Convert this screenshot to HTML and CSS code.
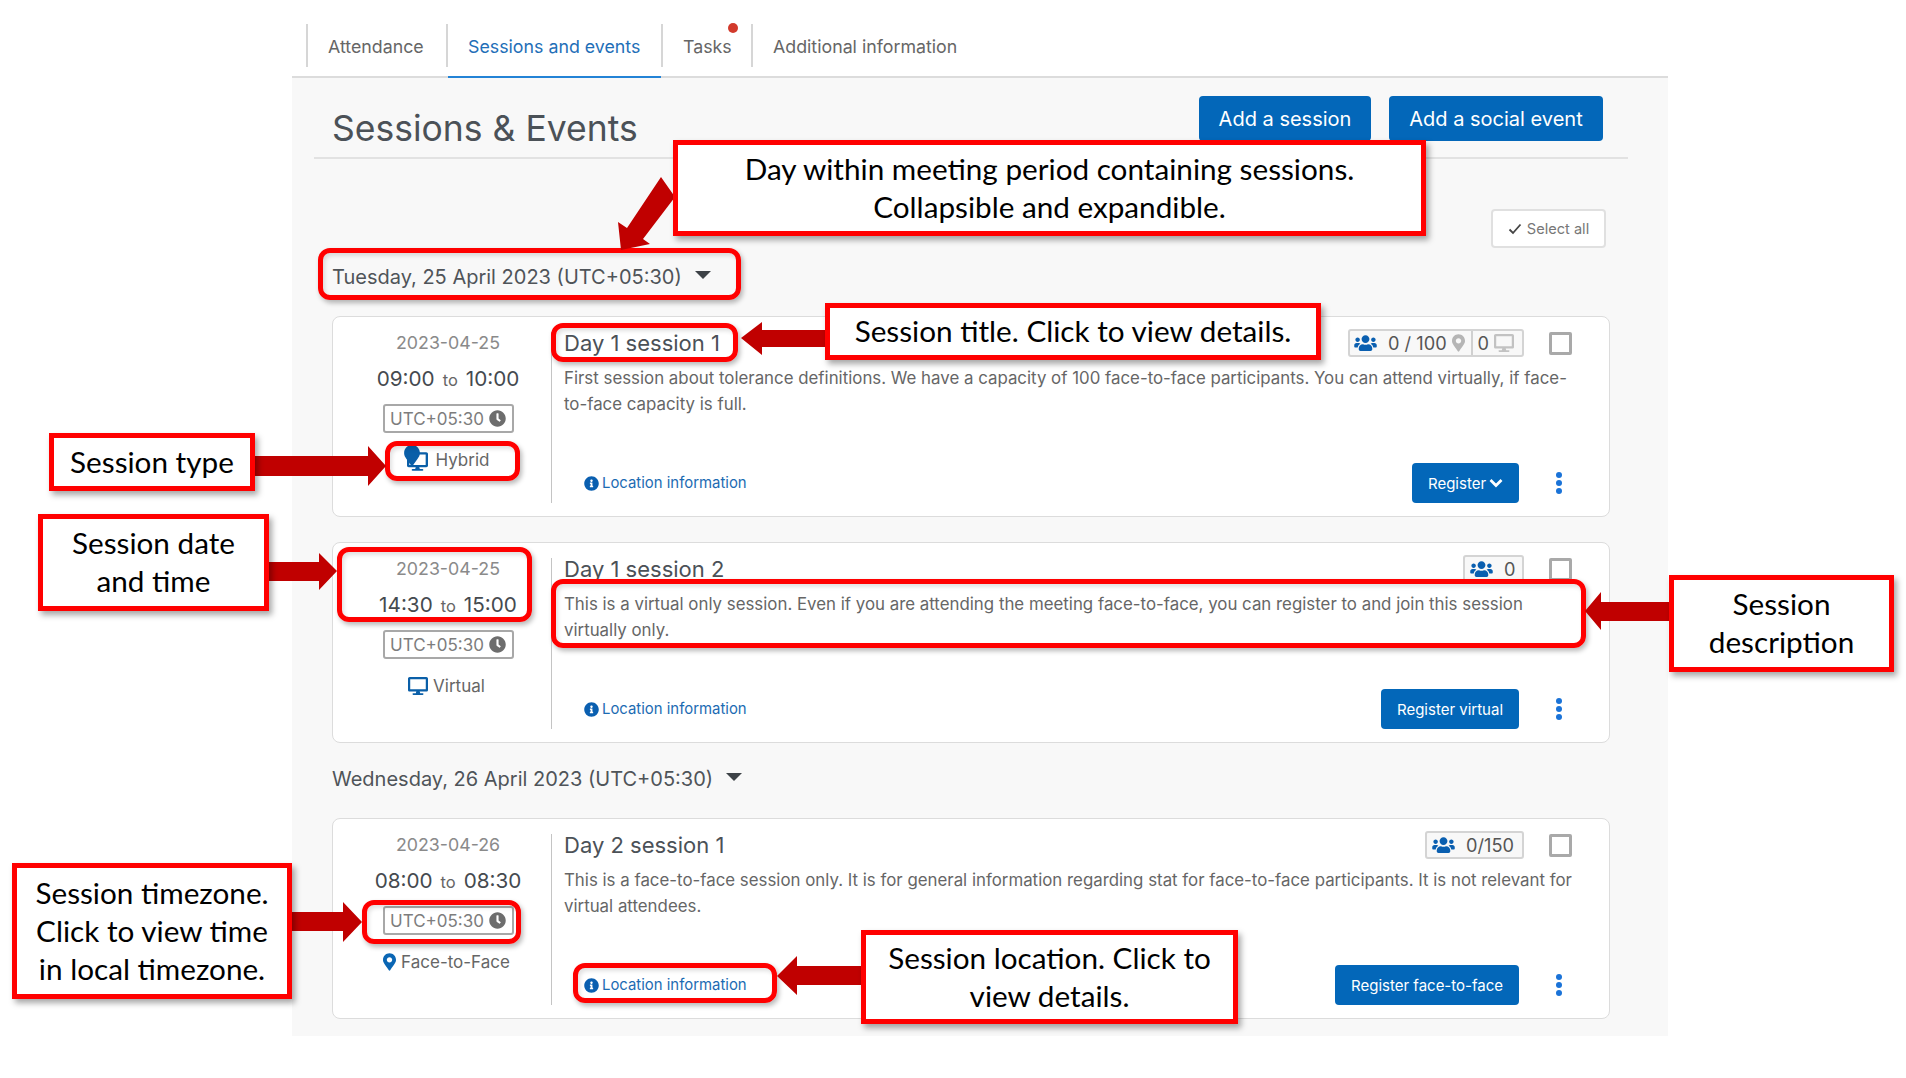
FILE: index.html
```html
<!DOCTYPE html>
<html lang="en">
<head>
<meta charset="utf-8">
<title>Sessions &amp; Events</title>
<link rel="stylesheet" href="styles.css">
</head>
<body>
<svg class="defs" width="0" height="0" aria-hidden="true">
  <symbol id="i-users" viewBox="0 0 640 512"><path d="M96 224c35.300 0 64-28.700 64-64s-28.700-64-64-64-64 28.700-64 64 28.700 64 64 64zm448 0c35.300 0 64-28.700 64-64s-28.700-64-64-64-64 28.700-64 64 28.700 64 64 64zm32 32h-64c-17.600 0-33.500 7.100-45.100 18.600 40.300 22.100 68.900 62 75.100 109.400h66c17.700 0 32-14.300 32-32v-32c0-35.300-28.700-64-64-64zm-256 0c61.900 0 112-50.100 112-112S381.900 32 320 32 208 82.100 208 144s50.100 112 112 112zm76.800 32h-8.300c-20.800 10-43.900 16-68.500 16s-47.600-6-68.500-16h-8.300C179.600 288 128 339.600 128 403.200V432c0 26.500 21.500 48 48 48h288c26.500 0 48-21.500 48-48v-28.800c0-63.600-51.600-115.200-115.200-115.200zm-223.700-13.400C161.500 263.100 145.600 256 128 256H64c-35.300 0-64 28.700-64 64v32c0 17.700 14.300 32 32 32h65.900c6.300-47.400 34.900-87.300 75.200-109.400z"/></symbol>
  <symbol id="i-clock" viewBox="0 0 512 512"><path d="M256,8C119,8,8,119,8,256S119,504,256,504,504,393,504,256,393,8,256,8Zm92.490,313h0l-20,25a16,16,0,0,1-22.490,2.500h0l-67-49.720a40,40,0,0,1-15-31.230V112a16,16,0,0,1,16-16h32a16,16,0,0,1,16,16V256l58,42.500A16,16,0,0,1,348.490,321Z"/></symbol>
  <symbol id="i-info" viewBox="0 0 512 512"><path d="M256 8C119.043 8 8 119.083 8 256c0 136.997 111.043 248 248 248s248-111.003 248-248C504 119.083 392.957 8 256 8zm0 110c23.196 0 42 18.804 42 42s-18.804 42-42 42-42-18.804-42-42 18.804-42 42-42zm56 254c0 6.627-5.373 12-12 12h-88c-6.627 0-12-5.373-12-12v-24c0-6.627 5.373-12 12-12h12v-64h-12c-6.627 0-12-5.373-12-12v-24c0-6.627 5.373-12 12-12h64c6.627 0 12 5.373 12 12v100h12c6.627 0 12 5.373 12 12v24z"/></symbol>
  <symbol id="i-marker" viewBox="0 0 384 512"><path d="M172.268 501.670C26.970 291.031 0 269.413 0 192 0 85.961 85.961 0 192 0s192 85.961 192 192c0 77.413-26.970 99.031-172.268 309.670-9.535 13.774-29.930 13.773-39.464 0zM192 272c44.183 0 80-35.817 80-80s-35.817-80-80-80-80 35.817-80 80 35.817 80 80 80z"/></symbol>
  <symbol id="i-marker-solid" viewBox="0 0 384 512"><path d="M172.268 501.670C26.970 291.031 0 269.413 0 192 0 85.961 85.961 0 192 0s192 85.961 192 192c0 77.413-26.970 99.031-172.268 309.670-9.535 13.774-29.930 13.773-39.464 0z"/></symbol>
  <symbol id="i-desktop" viewBox="0 0 576 512"><path d="M528 0H48C21.500 0 0 21.500 0 48v320c0 26.500 21.500 48 48 48h192l-16 48h-72c-13.300 0-24 10.700-24 24s10.700 24 24 24h272c13.300 0 24-10.700 24-24s-10.700-24-24-24h-72l-16-48h192c26.500 0 48-21.500 48-48V48c0-26.500-21.500-48-48-48zm-16 352H64V64h448v288z"/></symbol>
</svg>

<main class="panel">
  <nav class="tabs">
    <a class="tab tab-attendance">Attendance</a>
    <a class="tab tab-sessions tab-active">Sessions and events</a>
    <a class="tab tab-tasks">Tasks<span class="dot"></span></a>
    <a class="tab tab-additional">Additional information</a>
  </nav>

  <header class="head">
    <h1 class="title">Sessions &amp; Events</h1>
    <div class="head-actions">
      <button class="btn btn-lg btn-session">Add a session</button>
      <button class="btn btn-lg btn-social">Add a social event</button>
    </div>
  </header>

  <div class="toolbar">
    <button class="select-all"><svg class="check" viewBox="0 0 14 12"><path d="M1.500 6.500 5 10l7.500-8.500"/></svg>Select all</button>
  </div>

  <section class="sessions">
    <h2 class="day day-first">Tuesday, 25 April 2023 (UTC+05:30)<span class="caret"></span></h2>

    <article class="card">
      <div class="when">
        <div class="date">2023-04-25</div>
        <div class="time">09:00<small>to</small>10:00</div>
        <div class="tz">UTC+05:30<svg class="i-clock"><use href="#i-clock"/></svg></div>
        <div class="type"><span class="hybrid"><svg class="hy-desk"><use href="#i-desktop"/></svg><svg class="hy-pin"><use href="#i-marker-solid"/></svg></span>Hybrid</div>
      </div>
      <div class="body">
        <div class="top">
          <h3 class="name">Day 1 session 1</h3>
          <div class="badge badge-hy">
            <svg class="i-users"><use href="#i-users"/></svg><span class="cnt">0 / 100</span><svg class="i-pin-g"><use href="#i-marker"/></svg><span class="cnt cnt-v">0</span><svg class="i-desk-g"><use href="#i-desktop"/></svg>
          </div>
          <span class="cb"></span>
        </div>
        <p class="desc">First session about tolerance definitions. We have a capacity of 100 face-to-face participants. You can attend virtually, if face-to-face capacity is full.</p>
        <div class="foot">
          <a class="loc"><svg class="i-info"><use href="#i-info"/></svg>Location information</a>
          <button class="btn btn-sm btn-reg">Register<svg class="chev" viewBox="0 0 14 10"><path d="M1.500 2l5.500 5.500L12.500 2"/></svg></button>
          <span class="kebab"><i></i><i></i><i></i></span>
        </div>
      </div>
    </article>

    <article class="card card-next">
      <div class="when">
        <div class="date">2023-04-25</div>
        <div class="time">14:30<small>to</small>15:00</div>
        <div class="tz">UTC+05:30<svg class="i-clock"><use href="#i-clock"/></svg></div>
        <div class="type"><svg class="i-desk"><use href="#i-desktop"/></svg>Virtual</div>
      </div>
      <div class="body">
        <div class="top">
          <h3 class="name">Day 1 session 2</h3>
          <div class="badge badge-one">
            <svg class="i-users"><use href="#i-users"/></svg><span class="cnt">0</span>
          </div>
          <span class="cb"></span>
        </div>
        <p class="desc">This is a virtual only session. Even if you are attending the meeting face-to-face, you can register to and join this session virtually only.</p>
        <div class="foot">
          <a class="loc"><svg class="i-info"><use href="#i-info"/></svg>Location information</a>
          <button class="btn btn-sm btn-virtual">Register virtual</button>
          <span class="kebab"><i></i><i></i><i></i></span>
        </div>
      </div>
    </article>

    <h2 class="day day-second">Wednesday, 26 April 2023 (UTC+05:30)<span class="caret"></span></h2>

    <article class="card">
      <div class="when">
        <div class="date">2023-04-26</div>
        <div class="time">08:00<small>to</small>08:30</div>
        <div class="tz">UTC+05:30<svg class="i-clock"><use href="#i-clock"/></svg></div>
        <div class="type"><svg class="i-pin"><use href="#i-marker"/></svg>Face-to-Face</div>
      </div>
      <div class="body">
        <div class="top">
          <h3 class="name">Day 2 session 1</h3>
          <div class="badge badge-f2f">
            <svg class="i-users"><use href="#i-users"/></svg><span class="cnt">0/150</span>
          </div>
          <span class="cb"></span>
        </div>
        <p class="desc">This is a face-to-face session only. It is for general information regarding stat for face-to-face participants. It is not relevant for virtual attendees.</p>
        <div class="foot">
          <a class="loc"><svg class="i-info"><use href="#i-info"/></svg>Location information</a>
          <button class="btn btn-sm btn-f2f">Register face-to-face</button>
          <span class="kebab"><i></i><i></i><i></i></span>
        </div>
      </div>
    </article>
  </section>
</main>

<div class="notes">
  <div class="hl hl-day"></div>
  <div class="hl hl-title"></div>
  <div class="hl hl-type"></div>
  <div class="hl hl-when"></div>
  <div class="hl hl-desc"></div>
  <div class="hl hl-tz"></div>
  <div class="hl hl-loc"></div>

  <svg class="arrows" viewBox="0 0 1906 1078">
    <polygon points="661,177 675,197 643,239 650,244 621,250 618,222 627,228"/>
    <polygon points="825,330 762,330 762,322 741,338 762,355 762,347 825,347"/>
    <polygon points="255,456 368,456 368,446 386,466 368,486 368,476 255,476"/>
    <polygon points="269,562 319,562 319,553 337,571 319,590 319,581 269,581"/>
    <polygon points="1669,602 1601,602 1601,592 1585,611 1601,630 1601,621 1669,621"/>
    <polygon points="292,912 343,912 343,902 362,922 343,942 343,931 292,931"/>
    <polygon points="861,966 797,966 797,956 777,976 797,995 797,985 861,985"/>
  </svg>

  <div class="note note-day">Day within meeting period containing sessions.<br>Collapsible and expandible.</div>
  <div class="note note-title">Session title. Click to view details.</div>
  <div class="note note-type">Session type</div>
  <div class="note note-when">Session date<br>and time</div>
  <div class="note note-desc">Session<br>description</div>
  <div class="note note-tz">Session timezone.<br>Click to view time<br>in local timezone.</div>
  <div class="note note-loc">Session location. Click to<br>view details.</div>
</div>
</body>
</html>
```

FILE: styles.css
```css
* { box-sizing: border-box; }

html, body {
  margin: 0;
  background: #fff;
}

body {
  position: relative;
  width: 1906px;
  height: 1078px;
  overflow: hidden;
  font-family: Inter, "Liberation Sans", sans-serif;
  color: #555;
}

.defs { position: absolute; }

svg { display: block; fill: currentColor; flex: none; }

/* ---------- page ---------- */
.panel {
  margin-left: 292px;
  width: 1376px;
  height: 1036px;
  background: #f8f8f8;
}

.tabs {
  display: flex;
  height: 78px;
  padding: 24px 0 0 14px;
  background: #fff;
  border-bottom: 2px solid #dcdcdc;
}

.tab {
  position: relative;
  height: 43px;
  border-left: 2px solid #d6d6d6;
  padding: 0 0 0 20px;
  font-size: 17.800px;
  line-height: 45px;
  color: #666;
}

.tab-attendance { width: 140px; }
.tab-sessions { width: 215px; }
.tab-tasks { width: 90px; }
.tab-additional { width: 300px; }

.tab-active { color: #1f6fb8; }

.tab-active::after {
  content: "";
  position: absolute;
  left: 0;
  right: 0;
  bottom: -11px;
  height: 2px;
  background: #2383d6;
}

.dot {
  position: absolute;
  left: 65px;
  top: -1px;
  width: 10px;
  height: 10px;
  border-radius: 50%;
  background: #d23a2c;
}

.head {
  display: flex;
  justify-content: space-between;
  align-items: flex-start;
  height: 81px;
  margin: 0 40px 0 22px;
  padding: 18px 25px 0 18px;
  border-bottom: 2px solid #e2e2e2;
}

.title {
  margin: 11px 0 0;
  font-size: 35.500px;
  line-height: 44px;
  font-weight: 400;
  color: #4b5157;
}

.head-actions {
  display: flex;
  gap: 18px;
}

.btn {
  display: flex;
  align-items: center;
  justify-content: center;
  border: 0;
  border-radius: 4px;
  background: #0367b9;
  color: #fff;
  font-family: inherit;
}

.btn-lg { height: 45px; font-size: 20px; }
.btn-session { width: 172px; }
.btn-social { width: 214px; }

.toolbar {
  display: flex;
  justify-content: flex-end;
  margin-top: 50px;
  padding-right: 62px;
}

.select-all {
  display: flex;
  align-items: center;
  justify-content: center;
  gap: 5px;
  width: 115px;
  height: 39px;
  border: 2px solid #e0e0e0;
  border-radius: 4px;
  background: #fff;
  font-family: inherit;
  font-size: 14.600px;
  color: #777;
}

.check {
  width: 14px;
  height: 12px;
  fill: none;
  stroke: #444;
  stroke-width: 1.800;
}

.sessions { padding: 0 58px 0 40px; }

.day {
  display: flex;
  align-items: center;
  margin: 0;
  height: 26px;
  font-size: 20px;
  font-weight: 400;
  color: #4f5459;
}

.day-first { margin-top: 16px; margin-bottom: 26px; }
.day-second { margin-top: 23px; margin-bottom: 26px; }

.caret {
  width: 0;
  height: 0;
  margin: -4px 0 0 13px;
  border-left: 8px solid transparent;
  border-right: 8px solid transparent;
  border-top: 8px solid #3d4247;
}

.card {
  display: grid;
  grid-template-columns: 219px 1fr;
  height: 201px;
  padding: 15px 0 13px;
  background: #fff;
  border: 1.500px solid #dcdcdc;
  border-radius: 8px;
}

.card-next { margin-top: 25px; }

.when {
  display: flex;
  flex-direction: column;
  align-items: center;
  padding-left: 12px;
  border-right: 1.500px solid #c4c4c4;
}

.date {
  height: 22px;
  line-height: 22px;
  font-size: 17.800px;
  color: #8a8a8a;
}

.time {
  height: 24px;
  margin-top: 13px;
  line-height: 24px;
  font-size: 20.700px;
  color: #454a4f;
}

.time small {
  margin: 0 8px;
  font-size: 16.500px;
  color: #666;
}

.tz {
  display: flex;
  align-items: center;
  justify-content: center;
  gap: 5px;
  width: 131px;
  height: 29px;
  margin-top: 13px;
  border: 2px solid #a8a8a8;
  border-radius: 3px;
  font-size: 17px;
  color: #7d7d7d;
}

.i-clock { width: 17px; height: 17px; color: #6d6d6d; }

.type {
  display: flex;
  align-items: center;
  justify-content: center;
  gap: 5px;
  height: 24px;
  margin: 15px 3px 0 0;
  font-size: 17px;
  color: #666;
}

.hybrid {
  position: relative;
  width: 24px;
  height: 24px;
  margin-right: 3px;
  color: #0a5fa8;
}

.hy-desk { position: absolute; left: 3px; top: 4px; width: 21px; height: 19px; }
.hy-pin { position: absolute; left: 0; top: -3px; width: 16px; height: 21px; }

.i-desk { width: 20px; height: 18px; color: #0a5fa8; }
.i-pin { width: 13px; height: 18px; color: #0a66b4; }

.body {
  display: flex;
  flex-direction: column;
  min-width: 0;
  padding: 0 37px 0 12px;
}

.top {
  display: flex;
  align-items: center;
  height: 22px;
}

.name {
  flex: 1;
  margin: 0;
  font-size: 22px;
  font-weight: 400;
  color: #4b5157;
}

.badge {
  display: flex;
  align-items: center;
  height: 28px;
  border: 2px solid #d4d4d4;
  border-radius: 3px;
  background: #f8f8f8;
  font-size: 18.200px;
  color: #555;
}

.badge-hy { width: 176px; padding-left: 4px; }
.badge-one { width: 61px; padding-left: 5px; }
.badge-f2f { width: 99px; padding-left: 5px; }

.i-users { width: 23px; height: 18px; color: #0a5fb0; }

.cnt { margin-left: 11px; }

.i-pin-g { width: 13px; height: 18px; margin-left: 5px; color: #b5b5b5; }

.cnt-v {
  display: block;
  align-self: stretch;
  margin-left: 6px;
  padding-left: 5px;
  line-height: 24px;
  border-left: 2px solid #d0d0d0;
}

.i-desk-g { width: 20px; height: 18px; margin-left: 5px; color: #c2c2c2; }

.cb {
  width: 23px;
  height: 23px;
  margin-left: 25px;
  border: 3px solid #a9a9a9;
  border-radius: 2px;
  background: #fff;
}

.desc {
  margin: 11px 0 0;
  font-size: 16.850px;
  line-height: 26px;
  color: #666;
}

.foot {
  display: flex;
  align-items: center;
  justify-content: flex-end;
  gap: 27px;
  margin-top: auto;
  padding-left: 20px;
}

.loc {
  display: flex;
  align-items: center;
  gap: 3px;
  margin-right: auto;
  font-size: 14.900px;
  color: #1c6bb3;
}

.i-info { width: 15px; height: 15px; color: #0a5fb0; }

.btn-sm { height: 40px; font-size: 15px; }
.btn-reg { width: 107px; gap: 3px; }
.btn-virtual { width: 138px; }
.btn-f2f { width: 184px; }

.chev {
  width: 14px;
  height: 10px;
  fill: none;
  stroke: #fff;
  stroke-width: 2.800;
}

.kebab {
  display: flex;
  flex-direction: column;
  align-items: center;
  gap: 2px;
  width: 26px;
}

.kebab i {
  width: 6px;
  height: 6px;
  border-radius: 50%;
  background: #1a73d8;
}

/* ---------- annotations laid over the screenshot ---------- */
.notes {
  position: absolute;
  left: 0;
  top: 0;
  width: 1906px;
  height: 1078px;
  pointer-events: none;
}

.arrows {
  position: absolute;
  left: 0;
  top: 0;
  width: 1906px;
  height: 1078px;
  fill: #c00000;
}

.hl {
  position: absolute;
  border: 5px solid #f00;
  border-radius: 12px;
  box-shadow: 2px 3px 5px rgba(0, 0, 0, .28), inset 2px 3px 4px rgba(0, 0, 0, .12);
}

.hl-day { left: 318px; top: 248px; width: 423px; height: 52px; }
.hl-title { left: 551px; top: 323px; width: 187px; height: 39px; }
.hl-type { left: 385px; top: 441px; width: 135px; height: 40px; }
.hl-when { left: 337px; top: 547px; width: 195px; height: 75px; }
.hl-desc { left: 551px; top: 579px; width: 1035px; height: 69px; }
.hl-tz { left: 362px; top: 900px; width: 159px; height: 44px; }
.hl-loc { left: 573px; top: 963px; width: 204px; height: 40px; }

.note {
  position: absolute;
  display: flex;
  align-items: center;
  justify-content: center;
  padding-bottom: 1px;
  text-align: center;
  border: 5px solid #f00;
  background: #fff;
  box-shadow: 3px 4px 6px rgba(0, 0, 0, .35);
  font-family: Lato, "Open Sans", sans-serif;
  font-size: 29.700px;
  line-height: 38px;
  color: #000;
}

.note-day { left: 673px; top: 140px; width: 753px; height: 96px; }
.note-title { left: 825px; top: 303px; width: 496px; height: 57px; }
.note-type { left: 49px; top: 433px; width: 206px; height: 58px; }
.note-when { left: 38px; top: 514px; width: 231px; height: 97px; }
.note-desc { left: 1669px; top: 575px; width: 225px; height: 97px; }
.note-tz { left: 12px; top: 863px; width: 280px; height: 136px; }
.note-loc { left: 861px; top: 930px; width: 377px; height: 94px; }
```
